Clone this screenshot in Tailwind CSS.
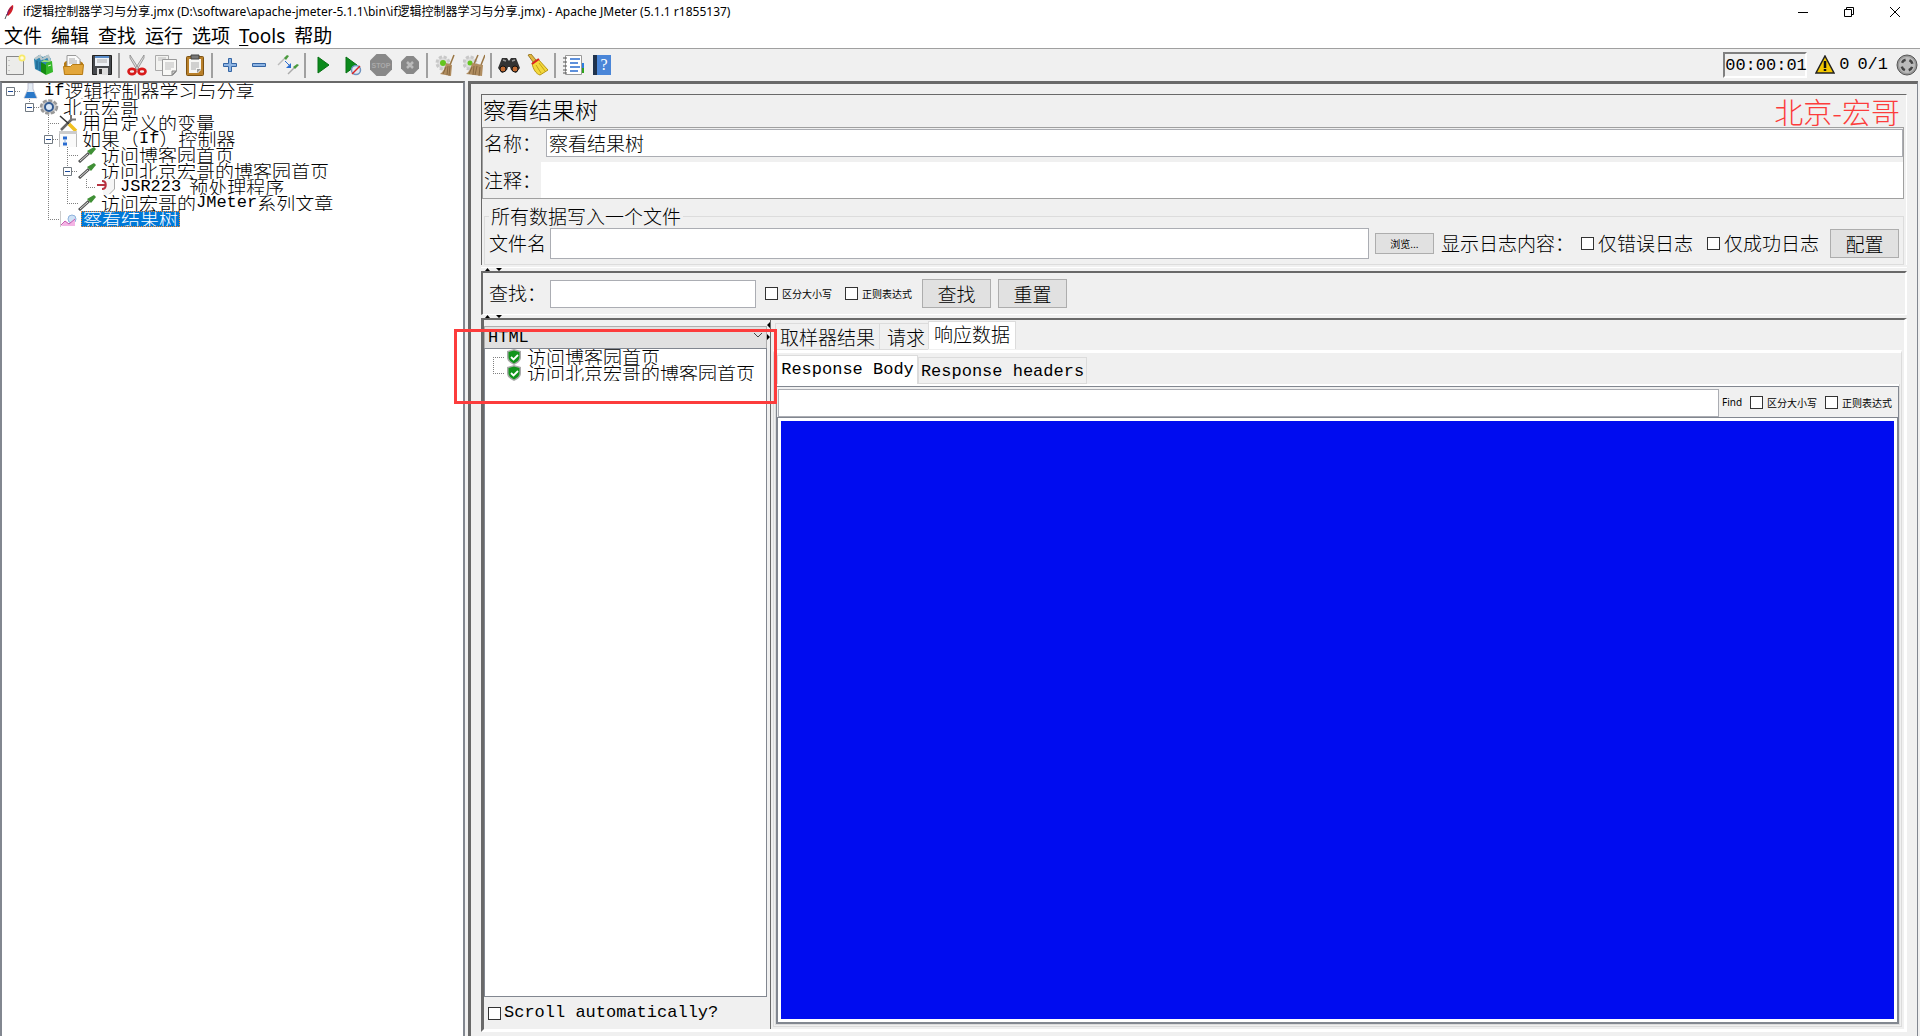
<!DOCTYPE html>
<html lang="zh-CN">
<head>
<meta charset="utf-8">
<title>if逻辑控制器学习与分享.jmx - Apache JMeter (5.1.1 r1855137)</title>
<script src="https://cdn.jsdelivr.net/npm/@tailwindcss/browser@4"></script>
</head>
<body class="h-screen overflow-hidden bg-[#f0f0f0] text-black text-[19px] font-light font-['Noto_Sans_CJK_SC',sans-serif]">
<div class="flex h-screen flex-col">

  <!-- title bar -->
  <header class="flex h-6 shrink-0 items-center bg-white pl-1 pr-5 text-xs font-normal font-['Noto_Sans','Noto_Sans_CJK_SC',sans-serif]">
    <svg class="mr-[7px] h-4 w-3" viewBox="0 0 12 16"><path d="M1 15 3 10" stroke="#555" stroke-width="1"/><path d="M3 11C3 7 6 2 9 1c1 3-1 8-5 11z" fill="#d22128"/><path d="M3 11c1-4 3-7 5-8" stroke="#6d2077" fill="none"/></svg>
    <h1 class="whitespace-nowrap">if逻辑控制器学习与分享.jmx (D:\software\apache-jmeter-5.1.1\bin\if逻辑控制器学习与分享.jmx) - Apache JMeter (5.1.1 r1855137)</h1>
    <div class="ml-auto flex gap-9">
      <button aria-label="最小化"><svg class="h-[10px] w-[10px]" viewBox="0 0 10 10"><path d="M0 5.5h10" stroke="#000"/></svg></button>
      <button aria-label="还原"><svg class="h-[10px] w-[10px]" viewBox="0 0 10 10" fill="none" stroke="#000"><path d="M.5 2.500h7v7h-7zM2.500 2.500v-2h7v7h-2"/></svg></button>
      <button aria-label="关闭"><svg class="h-[10px] w-[10px]" viewBox="0 0 10 10"><path d="M0 0 10 10M10 0 0 10" stroke="#000"/></svg></button>
    </div>
  </header>

  <!-- menu -->
  <nav class="flex h-6 shrink-0 items-center gap-[9px] bg-white pl-1 font-normal leading-6 font-['Noto_Sans','Noto_Sans_CJK_SC',sans-serif]">
    <a href="#">文件</a><a href="#">编辑</a><a href="#">查找</a><a href="#">运行</a><a href="#">选项</a><a href="#"><u class="underline-offset-2">T</u>ools</a><a href="#">帮助</a>
  </nav>

  <!-- toolbar -->
  <div class="flex h-[33px] shrink-0 items-center border-t border-[#a0a0a0] font-['Liberation_Mono',monospace]">
    <button class="flex w-[29px] justify-center" aria-label="新建"><svg class="size-[22px]" viewBox="0 0 22 22"><path d="M2.500 2.500h17v18h-17z" fill="#ececea" stroke="#888"/><path d="M5 6v1m0 4v1m0 4v1" stroke="#aaa"/><circle cx="18" cy="4" r="3.500" fill="#f7ea6a"/><circle cx="18" cy="4" r="1.800" fill="#fffbe0"/></svg></button>
    <button class="flex w-[29px] justify-center" aria-label="模板"><svg class="size-[22px]" viewBox="0 0 22 22"><path d="M1 5 6 1l4 2 5-2 3 4v6L8 18 2 15z" fill="#2f86b0"/><path d="M2 5l5-3 2 4M10 5l5-3 2 5" stroke="#b9c6c9" fill="none" stroke-width="2.500"/><path d="M4 7v8M7 8v9" stroke="#1a5d86"/><path d="M8 8l3-2 8 1-1 1z" fill="#9be07a"/><path d="M8 8l5 3v10l-5-3z" fill="#158a12"/><path d="M13 9l6-2 1 11-7 3z" fill="#35b82a"/><path d="M15 12l3-1" stroke="#dff5d8"/></svg></button>
    <button class="flex w-[29px] justify-center" aria-label="打开"><svg class="size-[22px]" viewBox="0 0 22 22"><path d="M2 9l2-2h14l3 2v10H2z" fill="#b67a12"/><path d="M5 1.500h9l4 4V14H5z" fill="#fafafa" stroke="#999"/><path d="M7 5h6M7 7h8M7 9h8" stroke="#aaa"/><path d="M1.500 12.500h7l2-2h11l-1 10h-18z" fill="#e2a63a" stroke="#b67a12"/></svg></button>
    <button class="flex w-[29px] justify-center" aria-label="保存"><svg class="size-[22px]" viewBox="0 0 22 22"><path d="M1.500 1.500h19v19h-19z" fill="#45484c" stroke="#222"/><path d="M4 2h14v10H4z" fill="#eef2f6"/><path d="M4 2h14v2H4z" fill="#5b8ecb"/><path d="M6 6h10M6 8h10" stroke="#aaa"/><path d="M6 14h11v7H6z" fill="#ddd"/><path d="M8 15h3v5H8z" fill="#333"/></svg></button>
    <i class="mx-[2px] h-[25px] border-l-2 border-[#a0a0a0]"></i>
    <button class="flex w-[29px] justify-center" aria-label="剪切"><svg class="size-[22px]" viewBox="0 0 22 22"><path d="M4 1l9 14-2 1L4 4zM18 1 9 15l2 1 7-12z" fill="#ddd" stroke="#888" stroke-width=".8"/><ellipse cx="6" cy="17.500" rx="3.500" ry="2.600" fill="none" stroke="#d81b1b" stroke-width="2.600"/><ellipse cx="16" cy="17.500" rx="3.500" ry="2.600" fill="none" stroke="#d81b1b" stroke-width="2.600"/></svg></button>
    <button class="flex w-[29px] justify-center" aria-label="复制"><svg class="size-[22px]" viewBox="0 0 22 22"><path d="M.5 1.500h13v15H.5z" fill="#f2f2f0" stroke="#aaa"/><path d="M3 4h8M3 6h8" stroke="#bbb"/><path d="M7.500 5.500h14v12l-4 4h-10z" fill="#f8f8f6" stroke="#999"/><path d="M10 9h9M10 11h9M10 13h9M10 15h6" stroke="#bbb"/><path d="M21 17l-4 4v-4z" fill="#ccc" stroke="#888"/></svg></button>
    <button class="flex w-[29px] justify-center" aria-label="粘贴"><svg class="size-[22px]" viewBox="0 0 22 22"><rect x="2.500" y="2.500" width="17" height="19" rx="1" fill="#b9802a" stroke="#7d5212"/><path d="M5 5h12v11l-3 3H5z" fill="#f6f6f4"/><path d="M7 1h8v4H7z" fill="#777" stroke="#444"/><path d="M7 9h8M7 11h8M7 13h8M7 15h5" stroke="#aaa"/><path d="M17 15l-4 4v-4z" fill="#999"/></svg></button>
    <i class="mx-[2px] h-[25px] border-l-2 border-[#a0a0a0]"></i>
    <button class="flex w-[29px] justify-center" aria-label="展开"><svg class="size-4" viewBox="0 0 16 16"><path d="M6.500 1.500h3v5h5v3h-5v5h-3v-5h-5v-3h5z" fill="#8db4e3" stroke="#3465a4"/></svg></button>
    <button class="flex w-[29px] justify-center" aria-label="折叠"><svg class="size-4" viewBox="0 0 16 16"><path d="M1.500 6.500h13v3h-13z" fill="#8db4e3" stroke="#3465a4"/></svg></button>
    <button class="flex w-[29px] justify-center" aria-label="切换"><svg class="size-[22px]" viewBox="0 0 22 22"><path d="M1 11 8 4" stroke="#bbb" stroke-width="1.500"/><path d="M7 4l3-3 2 1-3 4z" fill="#4a9a3e"/><path d="M11 20l6-6" stroke="#aaa" stroke-width="1.500"/><path d="M16 13l4-3 2 1-4 4z" fill="#4a9a3e"/><path d="M8 7l5 5" stroke="#2a6cd0"/><path d="M14 9v5H9z" fill="#2a6cd0"/></svg></button>
    <i class="mx-[2px] h-[25px] border-l-2 border-[#a0a0a0]"></i>
    <button class="flex w-[29px] justify-center" aria-label="启动"><svg class="size-[22px]" viewBox="0 0 22 22"><path d="M6 3l11 8L6 19z" fill="#0b8a1c" stroke="#087014"/></svg></button>
    <button class="flex w-[29px] justify-center" aria-label="不停顿启动"><svg class="size-[22px]" viewBox="0 0 22 22"><path d="M5 3l11 8L5 19z" fill="#0b8a1c" stroke="#087014"/><circle cx="15" cy="16" r="4.500" fill="#dfe8f3" stroke="#6f93bf" stroke-width="1.500"/><path d="M11 20l8-8" stroke="#d22" stroke-width="1.500"/></svg></button>
    <button class="flex w-[29px] justify-center" aria-label="停止" disabled><svg class="size-[22px]" viewBox="0 0 22 22"><path d="M6.500 0h9L22 6.500v9L15.500 22h-9L0 15.500v-9z" fill="#888"/><text x="11" y="14" text-anchor="middle" font-family="Liberation Sans" font-weight="bold" font-size="7" fill="#aaa">STOP</text></svg></button>
    <button class="flex w-[29px] justify-center" aria-label="关闭" disabled><svg class="size-[22px]" viewBox="0 0 22 22"><path d="M7.500 2h7L20 7.500v7L14.500 20h-7L2 14.500v-7z" fill="#888"/><path d="M8 8l6 6m0-6-6 6" stroke="#bbb" stroke-width="2.500"/></svg></button>
    <i class="mx-[2px] h-[25px] border-l-2 border-[#a0a0a0]"></i>
    <button class="flex w-[29px] justify-center" aria-label="清除"><svg class="size-[22px]" viewBox="0 0 22 22"><circle cx="9" cy="9" r="6" fill="#ddd" stroke="#c8c8c8" stroke-width="3" stroke-dasharray="3 1.700"/><circle cx="9" cy="9" r="3" fill="#63c51f"/><path d="M20 1l-4 10" stroke="#9a7644" stroke-width="1.500"/><path d="M12 9l6 2-1 11-11-2c3-2 5-6 6-11z" fill="#b08d60"/><path d="M12 13l-3 7m5-8-1 9m3-9-1 10" stroke="#7d6038" stroke-width=".8"/></svg></button>
    <button class="flex w-[29px] justify-center" aria-label="清除全部"><svg class="size-[22px]" viewBox="0 0 22 22"><circle cx="7" cy="9" r="6" fill="#ddd" stroke="#c8c8c8" stroke-width="3" stroke-dasharray="3 1.700"/><circle cx="7" cy="9" r="2.500" fill="#63c51f"/><path d="M15 1l-4 9M22 1l-4 10" stroke="#9a7644" stroke-width="1.500"/><path d="M9 9l11 2-1 11-16-2c3-2 5-6 6-11z" fill="#b08d60"/><path d="M9 13l-3 7m5-8-1 9m4-9-2 9m5-8-1 9" stroke="#7d6038" stroke-width=".8"/></svg></button>
    <i class="mx-[2px] h-[25px] border-l-2 border-[#a0a0a0]"></i>
    <button class="flex w-[29px] justify-center" aria-label="查找"><svg class="size-[22px]" viewBox="0 0 22 22"><path d="M4 4h5l2 3 2-3h5l4 10-4 5-5-3-1-3h-2l-1 3-5 3-4-5z" fill="#333"/><path d="M5 6l3 1M14 7l3-1" stroke="#999" stroke-width="1.500"/><circle cx="5" cy="15" r="3" fill="#c06b33" stroke="#111"/><circle cx="17" cy="15" r="3" fill="#c06b33" stroke="#111"/></svg></button>
    <button class="flex w-[29px] justify-center" aria-label="重置搜索"><svg class="size-[22px]" viewBox="0 0 22 22"><path d="M1 1l3-1 5 6-3 2z" fill="#e2b740" stroke="#8a6a14" stroke-width=".8"/><path d="M5 9l6-4 10 11-8 5c-4-1-7-6-8-12z" fill="#f4d93c" stroke="#b89512"/><path d="M5 10l7-5" stroke="#d22" stroke-width="2"/><path d="M9 11l5 8m-2-10 6 8" stroke="#b89512" stroke-width=".8"/></svg></button>
    <i class="mx-[2px] h-[25px] border-l-2 border-[#a0a0a0]"></i>
    <button class="flex w-[29px] justify-center" aria-label="函数助手"><svg class="size-[22px]" viewBox="0 0 22 22"><path d="M19 9h3v5h-3z" fill="#2a7de0"/><path d="M19 14h3v5h-3z" fill="#2fa31c"/><path d="M3.500 1.500h16v19h-16z" fill="#fff" stroke="#999"/><path d="M8 5h10M8 9h8M8 13h10M8 17h8" stroke="#2a6cd0" stroke-width="1.300"/><path d="M1 4h4M1 8h4M1 12h4M1 16h4M1 19h4" stroke="#555"/></svg></button>
    <button class="flex w-[29px] justify-center" aria-label="帮助"><svg class="size-[22px]" viewBox="0 0 22 22"><path d="M2 1h18v20H2z" fill="#4a86d8"/><path d="M2 1h4v20H2z" fill="#20324c"/><text x="13" y="16" text-anchor="middle" font-family="Liberation Serif" font-size="16" fill="#fff">?</text></svg></button>

    <output class="ml-auto h-[26px] w-[84px] border-2 border-b-white border-r-white border-t-[#808080] border-l-[#808080] text-[17px] leading-[23px] font-normal">00:00:01</output>
    <svg class="ml-2 size-5" viewBox="0 0 20 20"><path d="M10 1l9 17H1z" fill="#f5c800" stroke="#222" stroke-width="1.500"/><path d="M10 6v7M10 14v2" stroke="#111" stroke-width="2.500"/></svg>
    <span class="ml-1 text-[17px]">0</span>
    <span class="ml-2 text-[17px]">0/1</span>
    <svg class="ml-2 mr-[2px] size-[22px]" viewBox="0 0 22 22"><circle cx="11" cy="11" r="10" fill="#999" stroke="#555"/><circle cx="11" cy="11" r="8" fill="#bbb"/><circle cx="11" cy="11" r="5.500" fill="none" stroke="#444" stroke-width="2.500" stroke-dasharray="4.600 4" stroke-dashoffset="-2"/></svg>
  </div>

  <main class="flex min-h-0 flex-1">
    <!-- test plan tree -->
    <aside class="relative w-[465px] shrink-0 border-x-2 border-t-2 border-[#828790] border-t-[#696969] bg-white">
      <svg class="absolute left-0 top-0 h-[150px] w-[100px]" viewBox="0 0 100 150" fill="none" stroke="#808080" stroke-dasharray="1 1">
        <path d="M13 8.500h6M27.500 16v8M32 24.500h6M46.500 32v104M46 40.500h12M51 56.500h6M46 136.500h12M65.500 64v56M65 72.500h12M70 88.500h6M65 120.500h12M84.500 96v8M84 104.500h10"/>
        <g stroke="#707880" stroke-dasharray="none" fill="#fff"><path d="M4.500 4.500h8v8h-8zM23.500 20.500h8v8h-8zM42.500 52.500h8v8h-8zM61.500 84.500h8v8h-8z"/><path stroke="#1c4a9a" d="M6 8.500h5M25 24.500h5M44 56.500h5M63 88.500h5"/></g>
      </svg>
      <ul class="relative leading-4">
        <li class="flex h-4 items-center overflow-hidden whitespace-nowrap pl-[18px]"><svg class="mr-1 h-4 w-5" viewBox="0 0 20 16"><path d="M8 0h5v6l4 9H4l4-9z" fill="#e4ecf4" stroke="#aab" stroke-width=".7"/><path d="M7 9h7l2.500 6h-12z" fill="#2a78c8"/></svg><span class="font-['Liberation_Mono'] text-[17px]">if</span>逻辑控制器学习与分享</li>
        <li class="flex h-4 items-center overflow-hidden whitespace-nowrap pl-[37px]"><svg class="mr-1 h-4 w-5" viewBox="0 0 20 16"><ellipse cx="10" cy="8" rx="8" ry="6.500" fill="#ccc" stroke="#999" stroke-width="2.500" stroke-dasharray="4 1.500"/><circle cx="10" cy="8" r="4" fill="#dbe8f7" stroke="#335b91" stroke-width="2"/></svg>北京宏哥</li>
        <li class="flex h-4 items-center overflow-hidden whitespace-nowrap pl-[56px]"><svg class="mr-1 h-4 w-5" viewBox="0 0 20 16"><path d="M3 15 14 4" stroke="#666" stroke-width="2.500"/><path d="M13 0v4.500h5" stroke="#777" stroke-width="2" fill="none"/><path d="M2 1l9 8" stroke="#333" stroke-width="1.500"/><path d="M11 9l7 7" stroke="#f0c020" stroke-width="3.500"/></svg>用户定义的变量</li>
        <li class="flex h-4 items-center overflow-hidden whitespace-nowrap pl-[56px]"><svg class="mr-1 h-4 w-5" viewBox="0 0 20 16"><path d="M1.500 16V.5h17V16" fill="#fafafa" stroke="#bbb"/><path d="M1 0h18v3H1z" fill="#ccc"/><path d="M5 7h4M5 13h4" stroke="#2a6cd0" stroke-width="3"/><path d="M7 8v4" stroke="#8db4e3"/></svg>如果（<span class="font-['Liberation_Mono'] text-[17px]">If</span>）控制器</li>
        <li class="flex h-4 items-center overflow-hidden whitespace-nowrap pl-[75px]"><svg class="mr-1 h-4 w-5" viewBox="0 0 20 16"><path d="M2 15 12 6" stroke="#555" stroke-width="3"/><path d="M3 14l8-7" stroke="#ddd"/><path d="M10 4l4 4 5-6-2-2z" fill="#3f8f35"/></svg>访问博客园首页</li>
        <li class="flex h-4 items-center overflow-hidden whitespace-nowrap pl-[75px]"><svg class="mr-1 h-4 w-5" viewBox="0 0 20 16"><path d="M2 15 12 6" stroke="#555" stroke-width="3"/><path d="M3 14l8-7" stroke="#ddd"/><path d="M10 4l4 4 5-6-2-2z" fill="#3f8f35"/></svg>访问北京宏哥的博客园首页</li>
        <li class="flex h-4 items-center overflow-hidden whitespace-nowrap pl-[94px]"><svg class="mr-1 h-4 w-5" viewBox="0 0 20 16"><path d="M7 0h12v10l-6 6H7z" fill="#f6f6f6"/><path d="M18.500 0v10l-5 5" stroke="#aaa" fill="none"/><path d="M1 6h8M6 2c5 0 5 8 0 8" stroke="#b83240" stroke-width="2" fill="none"/></svg><span class="mr-2 font-['Liberation_Mono'] text-[17px]">JSR223</span>预处理程序</li>
        <li class="flex h-4 items-center overflow-hidden whitespace-nowrap pl-[75px]"><svg class="mr-1 h-4 w-5" viewBox="0 0 20 16"><path d="M2 15 12 6" stroke="#555" stroke-width="3"/><path d="M3 14l8-7" stroke="#ddd"/><path d="M10 4l4 4 5-6-2-2z" fill="#3f8f35"/></svg>访问宏哥的<span class="font-['Liberation_Mono'] text-[17px]">JMeter</span>系列文章</li>
        <li class="flex h-4 items-center overflow-hidden whitespace-nowrap pl-[56px]"><svg class="mr-[3px] h-4 w-5" viewBox="0 0 20 16"><path d="M2.500 0v16" stroke="#ccc"/><circle cx="14" cy="8" r="4" fill="#cfe2f6" stroke="#8fb2dc"/><path d="M3 15l4-5 4 3 6-5v7H3z" fill="#f3b4e4"/><path d="M3 14l4-4 4 3 6-5" stroke="#c65bb0" fill="none"/></svg><span class="h-4 overflow-hidden border border-dotted border-[#ff8728] bg-[#0078d7] px-px leading-[14px] text-white">察看结果树</span></li>
      </ul>
    </aside>

    <!-- component editor -->
    <div class="ml-[3px] mr-[2px] min-w-0 flex-1 border-l-[3px] border-r border-t-[3px] border-[#696969] border-r-[#828790]">
      <div class="flex h-full flex-col pl-[10px] pr-[10px] pt-[10px]">
        <section class="border-l border-r border-t border-[#696969] border-r-white">
          <div class="flex h-8 items-center justify-between pl-px pr-[6px]">
            <h2 class="pb-1 text-[23px] leading-7">察看结果树</h2>
            <span class="text-[29px] leading-8 text-[#fc3c3c]">北京-宏哥</span>
          </div>
          <div class="mr-[2px] border border-[#a0a0a0] pb-0 pt-px">
            <div class="flex h-7 items-center pl-px"><label for="nm" class="w-[62px] whitespace-nowrap">名称：</label><input id="nm" value="察看结果树" class="h-7 min-w-0 flex-1 border border-[#abadb3] bg-white px-[2px]"></div>
            <div class="mt-[5px] flex h-9 items-center pl-px"><label for="cm" class="w-[57px] whitespace-nowrap">注释：</label><input id="cm" class="h-9 min-w-0 flex-1 bg-white"></div>
          </div>
          <fieldset class="ml-[2px] mr-[2px] mt-[5px] h-[61px] border border-[#dcdcdc] px-1">
            <legend class="px-[2px] leading-6">所有数据写入一个文件</legend>
            <div class="flex items-center">
              <label for="fn" class="w-[61px] whitespace-nowrap">文件名</label>
              <input id="fn" class="h-[31px] min-w-0 flex-1 border border-[#abadb3] bg-white">
              <button class="ml-[6px] h-[21px] w-[59px] border border-[#adadad] bg-[#e1e1e1] text-[10px] leading-4 font-normal">浏览...</button>
              <span class="ml-[7px] w-[140px] whitespace-nowrap">显示日志内容：</span>
              <label class="flex items-center gap-1 whitespace-nowrap"><input type="checkbox" class="size-[13px] appearance-none border border-[#333] bg-white">仅错误日志</label>
              <label class="ml-[14px] flex items-center gap-1 whitespace-nowrap"><input type="checkbox" class="size-[13px] appearance-none border border-[#333] bg-white">仅成功日志</label>
              <button class="ml-[11px] h-[29px] w-[69px] border border-[#adadad] bg-[#e1e1e1] leading-6">配置</button>
            </div>
          </fieldset>
        </section>
        <div class="mt-[2px] h-1 shrink-0 border-t border-white pl-1"><svg class="h-[3px] w-5" viewBox="0 0 20 3"><path d="M0 3h5L2.500 0zM11 0h6l-3 3z"/></svg></div>

        <section class="flex h-[44px] shrink-0 items-center border-l-2 border-t-2 border-r-2 border-b border-[#696969] border-r-white border-b-white pl-[6px]">
          <label for="sr" class="w-[61px] whitespace-nowrap">查找：</label>
          <input id="sr" class="h-7 w-[206px] border border-[#abadb3] bg-white">
          <label class="ml-[9px] flex w-[71px] items-center gap-1 whitespace-nowrap text-[10px] font-normal"><input type="checkbox" class="size-[13px] appearance-none border border-[#333] bg-white">区分大小写</label>
          <label class="ml-[9px] flex w-[70px] items-center gap-1 whitespace-nowrap text-[10px] font-normal"><input type="checkbox" class="size-[13px] appearance-none border border-[#333] bg-white">正则表达式</label>
          <button class="ml-[7px] h-[29px] w-[69px] border border-[#adadad] bg-[#e1e1e1] leading-6">查找</button>
          <button class="ml-[7px] h-[29px] w-[69px] border border-[#adadad] bg-[#e1e1e1] leading-6">重置</button>
        </section>
        <div class="h-[3px] shrink-0 pl-1"><svg class="block h-[3px] w-5" viewBox="0 0 20 3"><path d="M0 3h5L2.500 0zM11 0h6l-3 3z"/></svg></div>

        <section class="relative mb-1 flex min-h-0 flex-1 border-b-[3px] border-l-[3px] border-r-[3px] border-t-2 border-[#696969] border-b-white border-r-white">
          <!-- sampler results -->
          <div class="flex w-[283px] shrink-0 flex-col">
            <div class="relative h-7 shrink-0">
              <select aria-label="渲染器" class="h-7 w-full appearance-none border border-[#adadad] bg-[#e1e1e1] px-[3px] pb-1 text-[17px] leading-5 font-['Liberation_Mono',monospace]"><option>HTML</option></select>
              <svg class="pointer-events-none absolute right-1 top-3 h-[6px] w-[10px]" viewBox="0 0 10 6"><path d="M1 1l4 4 4-4" fill="none" stroke="#444"/></svg>
            </div>
            <div class="relative min-h-0 flex-1 border border-[#828790] bg-white">
              <svg class="absolute left-2 top-0 h-8 w-3" viewBox="0 0 12 32" fill="none" stroke="#808080" stroke-dasharray="1 1"><path d="M.5 8v16M0 8.500h12M0 24.500h12"/></svg>
              <ul class="relative pl-5 leading-4">
                <li class="flex h-4 items-center overflow-hidden whitespace-nowrap"><svg class="mr-1 h-4 w-[18px]" viewBox="0 0 18 16"><path d="M9 0l7 2v6c0 4-3 6-7 8-4-2-7-4-7-8V2z" fill="#aaa"/><path d="M9 1.500l5.500 1.500V8c0 3-2 4.500-5.500 6.500C5.500 12.500 3.500 11 3.500 8V3z" fill="#12941c"/><path d="M6 8l2.500 2.500L13 6" stroke="#fff" stroke-width="1.800" fill="none"/></svg>访问博客园首页</li>
                <li class="flex h-4 items-center overflow-hidden whitespace-nowrap"><svg class="mr-1 h-4 w-[18px]" viewBox="0 0 18 16"><path d="M9 0l7 2v6c0 4-3 6-7 8-4-2-7-4-7-8V2z" fill="#aaa"/><path d="M9 1.500l5.500 1.500V8c0 3-2 4.500-5.500 6.500C5.500 12.500 3.500 11 3.500 8V3z" fill="#12941c"/><path d="M6 8l2.500 2.500L13 6" stroke="#fff" stroke-width="1.800" fill="none"/></svg>访问北京宏哥的博客园首页</li>
              </ul>
            </div>
            <label class="flex h-8 shrink-0 items-center gap-[3px] pl-1 text-[17px] font-['Liberation_Mono',monospace]"><input type="checkbox" class="size-[13px] appearance-none border border-[#333] bg-white">Scroll automatically?</label>
          </div>
          <div class="w-1 shrink-0 border-r border-[#696969]"><svg class="h-5 w-[3px]" viewBox="0 0 3 20"><path d="M3 2v6L0 5zM0 14v6l3-3z"/></svg></div>

          <!-- result tabs -->
          <div class="flex min-w-0 flex-1 flex-col pb-[2px] pl-[2px] pr-[2px]">
            <div role="tablist" class="flex h-[30px] shrink-0 items-end pl-[2px] leading-6">
              <button role="tab" class="h-[27px] w-[105px] border border-[#dcdcdc] text-center">取样器结果</button>
              <button role="tab" class="h-[27px] w-12 border-y border-[#dcdcdc] pl-1 text-center">请求</button>
              <button role="tab" aria-selected="true" class="mb-px h-[28px] w-[88px] border-x border-t border-[#dcdcdc] bg-white pb-1 text-center">响应数据</button>
            </div>
            <div class="flex min-h-0 flex-1 flex-col border border-t-[3px] border-[#dcdcdc] border-t-white px-px pb-px pt-px">
              <div role="tablist" class="flex h-[30px] shrink-0 items-end pl-[2px] text-[17px] font-['Liberation_Mono',monospace]">
                <button role="tab" aria-selected="true" class="h-[29px] w-[141px] whitespace-nowrap border border-b-0 border-[#dcdcdc] bg-white text-center">Response Body</button>
                <button role="tab" class="h-[27px] w-[169px] whitespace-nowrap border border-[#dcdcdc] pt-px text-center">Response headers</button>
              </div>
              <div class="flex min-h-0 flex-1 flex-col border border-[#dcdcdc] border-t-0 bg-white pt-[2px]">
                <div class="flex min-h-0 flex-1 flex-col border border-[#828790] bg-[#f0f0f0] pt-px">
                  <div class="flex h-[29px] shrink-0 items-center pl-px pr-[6px] text-[10px] font-normal">
                    <input aria-label="Find" class="h-7 min-w-0 flex-1 border border-[#abadb3] bg-white">
                    <button class="ml-[3px] w-[28px] text-left font-['Noto_Sans',sans-serif]">Find</button>
                    <label class="flex w-[75px] items-center gap-1 whitespace-nowrap"><input type="checkbox" class="size-[13px] appearance-none border border-[#333] bg-white">区分大小写</label>
                    <label class="flex items-center gap-1 whitespace-nowrap"><input type="checkbox" class="size-[13px] appearance-none border border-[#333] bg-white">正则表达式</label>
                  </div>
                  <div class="min-h-0 flex-1 border border-[#828790] bg-white p-[3px]"><div class="h-full bg-[#000cf0]"></div></div>
                </div>
              </div>
            </div>
          </div>
          <!-- highlight frame round the sampler list -->
          <div class="pointer-events-none absolute -left-[30px] top-[9px] h-[75px] w-[323px] border-[3px] border-[#fc3c3c]"></div>
        </section>
      </div>
    </div>
  </main>
</div>
</body>
</html>
